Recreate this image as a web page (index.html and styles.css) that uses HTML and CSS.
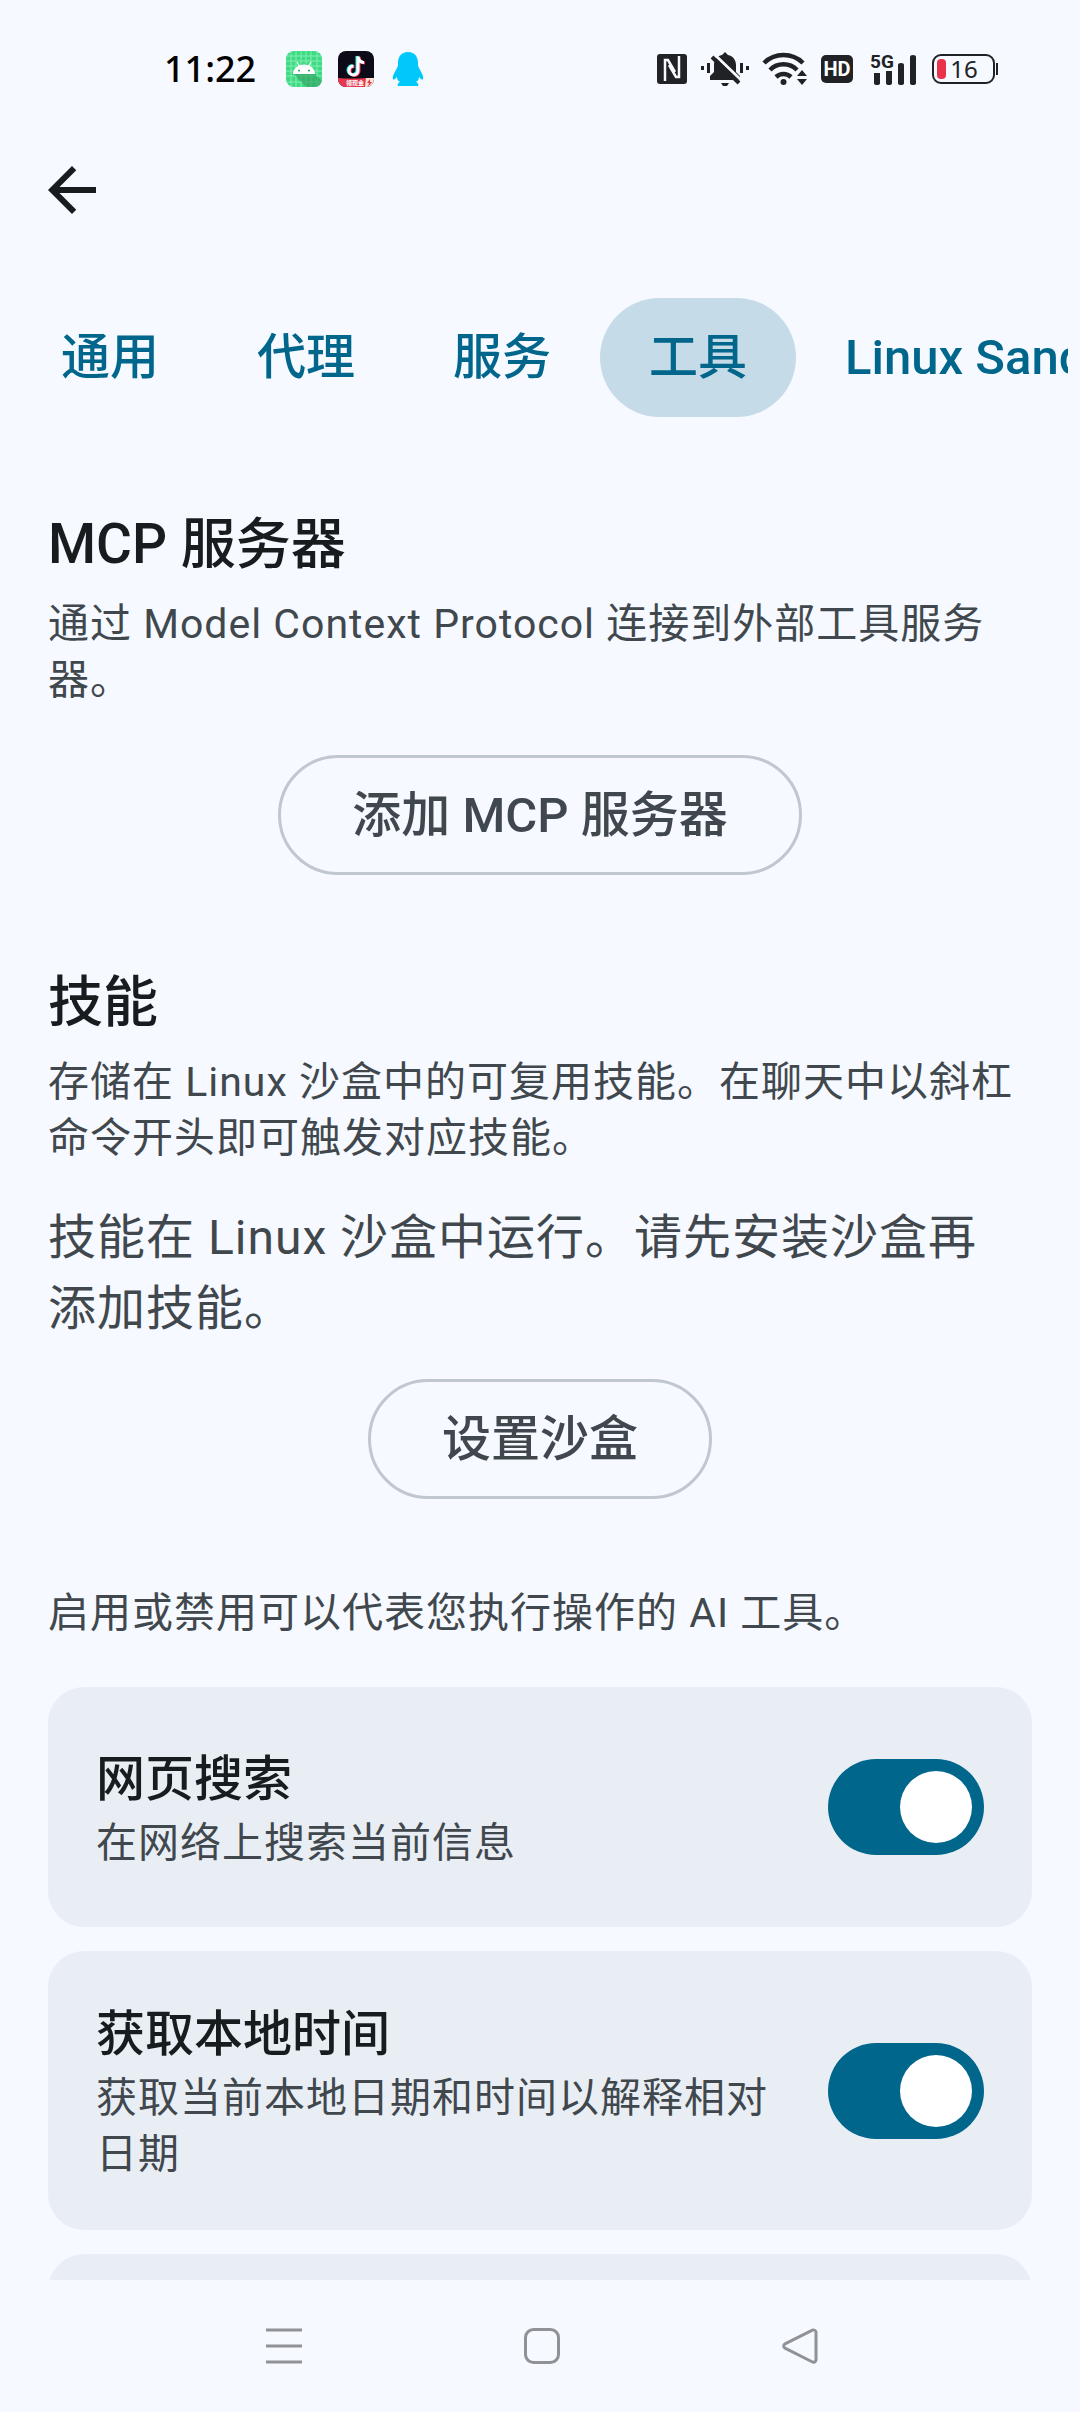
FILE: index.html
```html
<!DOCTYPE html>
<html lang="zh-CN">
<head>
<meta charset="utf-8">
<meta name="viewport" content="width=device-width">
<title>工具</title>
<link rel="stylesheet" href="styles.css">
</head>
<body>
<div class="status-bar">
  <div class="status-left">
    <span class="clock">11:22</span>
    <svg class="app-icon" viewBox="0 0 36 36" aria-hidden="true">
      <rect width="36" height="36" rx="8" fill="#3ddc84"/>
      <path d="M5 1v34M10 0v36M15 0v36M20 0v36M25 0v36M31 1v34M1 5h34M0 10h36M0 15h36M0 20h36M0 25h36M1 31h34" stroke="#86ebb3" stroke-width="1"/>
      <path d="M29 23l7 7a8 8 0 0 1-8 6h-8L8 23z" fill="#2a9c5c" opacity=".6"/>
      <path d="M11 11l3 5M25 11l-3 5" stroke="#fff" stroke-width="1.2"/>
      <path d="M7 23a11 9.500 0 0 1 22 0z" fill="#fff"/>
      <circle cx="13" cy="19.500" r="1" fill="#2a9c5c"/><circle cx="23" cy="19.500" r="1" fill="#2a9c5c"/>
    </svg>
    <svg class="app-icon" viewBox="0 0 36 36" aria-hidden="true">
      <clipPath id="app-clip"><rect width="36" height="36" rx="8"/></clipPath>
      <g clip-path="url(#app-clip)">
        <rect width="36" height="36" fill="#0d0b18"/>
        <g fill="none" stroke-width="3">
          <path d="M19 5v14a4.500 4.500 0 1 1-4.500-4.500M19 5c.5 4 3 6 6 6" stroke="#25f4ee"/>
          <path d="M21 6v14a4.500 4.500 0 1 1-4.500-4.500M21 6c.5 4 3 6 6 6" stroke="#fe2c55"/>
          <path d="M20 5.500v14a4.500 4.500 0 1 1-4.500-4.500M20 5.500c.5 4 3 6 6 6" stroke="#fff"/>
        </g>
        <path d="M0 27q14 1 28 0v9H0z" fill="#e8384f"/>
        <path d="M28 27h8v9h-9z" fill="#ffe3d0"/>
        <path d="M32 28l-3 4h2l-1 4 4-5h-2z" fill="#e8384f"/>
        <text x="8" y="34" class="badge-text">领现金</text>
      </g>
    </svg>
    <svg class="app-icon" viewBox="0 0 36 36" aria-hidden="true">
      <path d="M18 1c7 0 10 5 10 11 0 2 0 3 1 5 2 4 5 8 4 11-1 2-3-1-4-2 0 2-1 4-3 5 2 1 3 2 2 4H8c-1-2 0-3 2-4-2-1-3-3-3-5-1 1-3 4-4 2-1-3 2-7 4-11 1-2 1-3 1-5C8 6 11 1 18 1z" fill="#00c8fa"/>
    </svg>
  </div>
  <div class="status-right">
    <svg width="30" height="30" viewBox="0 0 30 30" aria-hidden="true">
      <rect width="30" height="30" rx="3" fill="#202225"/>
      <path d="M8 27V6h3l7 12M22 2v21h-3l-7-12" fill="none" stroke="#f6f9ff" stroke-width="2.500"/>
    </svg>
    <svg class="bell" width="48" height="34" viewBox="0 0 48 34" aria-hidden="true">
      <path d="M0 14h3v4H0zM6 11h3v10H6zM39 11h3v10h-3zM45 14h3v4h-3z" fill="#202225"/>
      <path d="M24 0l3 3c5 1 8 5 8 10v7l4 4v4H9v-4l4-4v-7c0-5 3-9 8-10zM20 31h8l-2 3h-4z" fill="#202225"/>
      <path d="M14 3l26 25" stroke="#f6f9ff" stroke-width="3"/>
      <path d="M11 5l27 26" stroke="#202225" stroke-width="4"/>
    </svg>
    <svg width="44" height="34" viewBox="0 0 44 34" aria-hidden="true">
      <g fill="none" stroke="#202225" stroke-width="4.500"><path d="M1 11a28 28 0 0 1 39 0M7 18a19 19 0 0 1 27 0M13 25a11 11 0 0 1 15 0"/></g>
      <circle cx="20.500" cy="30" r="3" fill="#202225"/>
      <path d="M34 24l5-6 5 6zM34 27h10l-5 6z" fill="#202225"/>
    </svg>
    <svg class="hd" width="32" height="28" viewBox="0 0 32 28" aria-hidden="true">
      <rect width="32" height="28" rx="5" fill="#202225"/>
      <text x="16" y="21" class="hd-text">HD</text>
    </svg>
    <svg class="signal" width="46" height="32" viewBox="0 0 46 32" aria-hidden="true">
      <path d="M4 20h6v10q0 2-3 2t-3-2zM16 18h6v12q0 2-3 2t-3-2zM28 12q0-2 3-2t3 2v18q0 2-3 2t-3-2zM40 4q0-2 3-2t3 2v26q0 2-3 2t-3-2z" fill="#202225"/>
      <text x="0" y="15" class="net-text">5G</text>
    </svg>
    <svg class="battery" width="67" height="30" viewBox="0 0 67 30" aria-hidden="true">
      <rect x="1" y="1" width="61" height="28" rx="8" fill="none" stroke="#202225" stroke-width="2"/>
      <path d="M65 9v12" stroke="#202225" stroke-width="2"/>
      <rect x="5" y="5" width="9" height="20" rx="4" fill="#e8334a"/>
      <text x="32" y="24" class="battery-text">16</text>
    </svg>
  </div>
</div>

<header class="app-bar">
  <button class="back" aria-label="返回">
    <svg width="72" height="72" viewBox="0 0 24 24"><path d="M20 11H7.830l5.590-5.590L12 4l-8 8 8 8 1.410-1.410L7.830 13H20v-2z" fill="#171c1f"/></svg>
  </button>
</header>

<nav class="tabs">
  <button class="tab">通用</button>
  <button class="tab">代理</button>
  <button class="tab">服务</button>
  <button class="tab tab-active" aria-current="page">工具</button>
  <button class="tab">Linux Sandbox</button>
</nav>

<main class="content">
  <section class="section">
    <h2 class="heading">MCP 服务器</h2>
    <p class="desc">通过 Model Context Protocol 连接到外部工具服务器。</p>
    <button class="outlined">添加 MCP 服务器</button>
  </section>
  <section class="section">
    <h2 class="heading">技能</h2>
    <p class="desc">存储在 Linux 沙盒中的可复用技能。在聊天中以斜杠命令开头即可触发对应技能。</p>
    <p class="body-text">技能在 Linux 沙盒中运行。请先安装沙盒再添加技能。</p>
    <button class="outlined">设置沙盒</button>
  </section>
  <section class="tools">
    <p class="desc">启用或禁用可以代表您执行操作的 AI 工具。</p>
    <div class="cards">
      <label class="card" for="web-search">
        <span class="card-text">
          <span class="card-title">网页搜索</span>
          <span class="desc">在网络上搜索当前信息</span>
        </span>
        <input class="switch" type="checkbox" id="web-search" checked>
      </label>
      <label class="card" for="local-time">
        <span class="card-text">
          <span class="card-title">获取本地时间</span>
          <span class="desc">获取当前本地日期和时间以解释相对日期</span>
        </span>
        <input class="switch" type="checkbox" id="local-time" checked>
      </label>
      <div class="card"></div>
    </div>
  </section>
</main>

<footer class="system-nav">
  <button class="nav-button" aria-label="最近任务">
    <svg width="36" height="36" viewBox="0 0 36 36"><path d="M0 2h36M0 18h36M0 34h36"/></svg>
  </button>
  <button class="nav-button" aria-label="主页">
    <svg width="36" height="36" viewBox="0 0 36 36"><rect x="1.500" y="1.500" width="33" height="33" rx="8"/></svg>
  </button>
  <button class="nav-button" aria-label="返回">
    <svg width="36" height="36" viewBox="0 0 36 36"><path d="M30.500 2.200L3 15.800a2.500 2.500 0 0 0 0 4.400L30.500 34a2.500 2.500 0 0 0 3.500-2V4a2.500 2.500 0 0 0-3.500-1.800z"/></svg>
  </button>
</footer>
</body>
</html>
```
FILE: styles.css
```css
* {
  box-sizing: border-box;
}

body {
  margin: 0;
  height: 100vh;
  display: flex;
  flex-direction: column;
  overflow: hidden;
  background: #f6f9ff;
  color: #171c1f;
  font-family: Roboto, "Noto Sans CJK SC", sans-serif;
}

button {
  margin: 0;
  padding: 0;
  border: 0;
  background: none;
  font: inherit;
  color: inherit;
}

svg {
  display: block;
  overflow: visible;
}

h2,
p {
  margin: 0;
}

/* Status bar */
.status-bar {
  flex: none;
  height: 138px;
  padding: 0 81px 0 164px;
  display: flex;
  justify-content: space-between;
  align-items: center;
}

.status-left {
  display: flex;
  align-items: center;
  gap: 16px;
}

.clock {
  margin-right: 14px;
  font: 500 36px/48px "Noto Sans", sans-serif;
  color: #000;
}

.app-icon {
  width: 36px;
  height: 36px;
}

.status-right {
  display: flex;
  align-items: center;
  gap: 14px;
}

.signal {
  margin-left: 3px;
}

.battery {
  margin-left: 2px;
}

.badge-text {
  font: 700 6px "Noto Sans CJK SC", sans-serif;
  fill: #fff;
}

.hd-text {
  font: 700 20px Roboto, sans-serif;
  text-anchor: middle;
  fill: #fff;
}

.net-text {
  font: 700 19px Roboto, sans-serif;
  fill: #202225;
}

.battery-text {
  font: 400 24px "Noto Sans", sans-serif;
  text-anchor: middle;
  fill: #202225;
}

/* App bar and tabs */
.app-bar {
  flex: none;
  padding: 16px 36px 72px;
}

.back {
  display: block;
}

.tabs {
  flex: none;
  margin: 0 12px;
  display: flex;
  overflow: hidden;
}

.tab {
  flex: none;
  height: 119px;
  padding: 0 49px;
  border-radius: 60px;
  font-size: 49px;
  line-height: 71px;
  font-weight: 500;
  color: #00668b;
  white-space: nowrap;
}

.tab-active {
  background: #c5dbe7;
}

/* Settings content */
.content {
  flex: 1;
  min-height: 0;
  overflow: hidden;
  padding: 86px 48px 0;
}

.section {
  display: flex;
  flex-direction: column;
  margin-bottom: 86px;
}

.heading {
  margin-bottom: 10px;
  font-size: 55px;
  line-height: 83px;
  font-weight: 500;
}

.desc {
  font-size: 41px;
  line-height: 56px;
  letter-spacing: 1px;
  color: #41484d;
}

.body-text {
  margin-top: 36px;
  padding-right: 24px;
  font-size: 48px;
  line-height: 71px;
  letter-spacing: 1px;
  color: #41484d;
}

.outlined {
  align-self: center;
  height: 120px;
  margin-top: 47px;
  padding: 0 71px;
  border: 3px solid #c0c7cd;
  border-radius: 60px;
  font-size: 49px;
  line-height: 71px;
  font-weight: 500;
  color: #41484d;
}

.body-text + .outlined {
  margin-top: 35px;
}

.cards {
  margin-top: 46px;
  display: flex;
  flex-direction: column;
  gap: 24px;
}

.card {
  min-height: 240px;
  padding: 48px;
  display: flex;
  align-items: center;
  gap: 48px;
  border-radius: 36px;
  background: #e9eef5;
}

.card-text {
  flex: 1;
  display: flex;
  flex-direction: column;
}

.card-title {
  font-size: 49px;
  line-height: 71px;
  font-weight: 500;
}

.switch {
  appearance: none;
  flex: none;
  width: 156px;
  height: 96px;
  margin: 0;
  padding: 12px;
  display: flex;
  border-radius: 48px;
  background: #8a9297;
}

.switch::before {
  content: "";
  width: 72px;
  height: 72px;
  border-radius: 50%;
  background: #fff;
}

.switch:checked {
  justify-content: flex-end;
  background: #00668b;
}

/* System navigation */
.system-nav {
  flex: none;
  height: 132px;
  padding-left: 4px;
  display: flex;
  justify-content: center;
  align-items: center;
  gap: 222px;
}

.nav-button svg {
  fill: none;
  stroke: #909297;
  stroke-width: 3;
}
```
